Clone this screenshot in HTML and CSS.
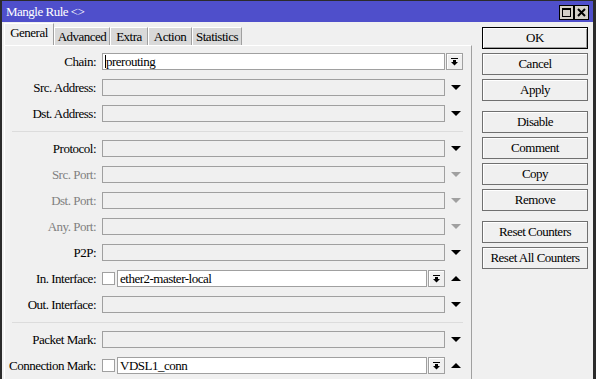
FILE: index.html
```html
<!DOCTYPE html>
<html>
<head>
<meta charset="utf-8">
<link rel="stylesheet" href="styles.css">
</head>
<body>
<div class="window">
  <div class="titlebar">
    <span class="title">Mangle Rule &lt;&gt;</span>
    <div class="tbtns">
      <span class="tbtn"><svg width="9" height="9" viewBox="0 0 9 9"><rect x="0.5" y="0.5" width="8" height="8" fill="none" stroke="#000"/><rect x="0" y="0" width="9" height="2" fill="#000"/></svg></span>
      <span class="tbtn"><svg width="9" height="9" viewBox="0 0 9 9"><path d="M1 1 L8 8 M8 1 L1 8" stroke="#000" stroke-width="2"/></svg></span>
    </div>
  </div>
  <div class="main">
    <div class="left">
      <div class="tabs">
        <div class="tab active w-general">General</div>
        <div class="tab w-advanced">Advanced</div>
        <div class="tab w-extra">Extra</div>
        <div class="tab w-action">Action</div>
        <div class="tab w-stats">Statistics</div>
      </div>
      <div class="panel">
        <div class="row">
          <div class="label">Chain:</div>
          <div class="ctrl">
            <div class="input white"><span class="caret"></span>prerouting</div>
            <div class="ddbtn"><svg width="7" height="8" viewBox="0 0 7 8"><rect x="0" y="0" width="7" height="1" fill="#000"/><rect x="2" y="2" width="3" height="2" fill="#000"/><polygon points="0,4 7,4 3.5,7.5" fill="#000"/></svg></div>
            <div class="pad4"></div>
          </div>
        </div>
        <div class="row">
          <div class="label">Src. Address:</div>
          <div class="ctrl"><div class="input"></div><div class="arrow"><span class="tri-down"></span></div></div>
        </div>
        <div class="row">
          <div class="label">Dst. Address:</div>
          <div class="ctrl"><div class="input"></div><div class="arrow"><span class="tri-down"></span></div></div>
        </div>
        <div class="sep"></div>
        <div class="row">
          <div class="label">Protocol:</div>
          <div class="ctrl"><div class="input"></div><div class="arrow"><span class="tri-down"></span></div></div>
        </div>
        <div class="row">
          <div class="label dis">Src. Port:</div>
          <div class="ctrl"><div class="input"></div><div class="arrow"><span class="tri-down dis"></span></div></div>
        </div>
        <div class="row">
          <div class="label dis">Dst. Port:</div>
          <div class="ctrl"><div class="input"></div><div class="arrow"><span class="tri-down dis"></span></div></div>
        </div>
        <div class="row">
          <div class="label dis">Any. Port:</div>
          <div class="ctrl"><div class="input"></div><div class="arrow"><span class="tri-down dis"></span></div></div>
        </div>
        <div class="row">
          <div class="label">P2P:</div>
          <div class="ctrl"><div class="input"></div><div class="arrow"><span class="tri-down"></span></div></div>
        </div>
        <div class="row">
          <div class="label">In. Interface:</div>
          <div class="ctrl">
            <div class="cb"></div>
            <div class="input white">ether2-master-local</div>
            <div class="ddbtn"><svg width="7" height="8" viewBox="0 0 7 8"><rect x="0" y="0" width="7" height="1" fill="#000"/><rect x="2" y="2" width="3" height="2" fill="#000"/><polygon points="0,4 7,4 3.5,7.5" fill="#000"/></svg></div>
            <div class="arrow"><span class="tri-up"></span></div>
          </div>
        </div>
        <div class="row">
          <div class="label">Out. Interface:</div>
          <div class="ctrl"><div class="input"></div><div class="arrow"><span class="tri-down"></span></div></div>
        </div>
        <div class="sep"></div>
        <div class="row">
          <div class="label">Packet Mark:</div>
          <div class="ctrl"><div class="input"></div><div class="arrow"><span class="tri-down"></span></div></div>
        </div>
        <div class="row">
          <div class="label">Connection Mark:</div>
          <div class="ctrl">
            <div class="cb"></div>
            <div class="input white">VDSL1_conn</div>
            <div class="ddbtn"><svg width="7" height="8" viewBox="0 0 7 8"><rect x="0" y="0" width="7" height="1" fill="#000"/><rect x="2" y="2" width="3" height="2" fill="#000"/><polygon points="0,4 7,4 3.5,7.5" fill="#000"/></svg></div>
            <div class="arrow"><span class="tri-up"></span></div>
          </div>
        </div>
      </div>
    </div>
    <div class="btns">
      <div class="btn default">OK</div>
      <div class="btn">Cancel</div>
      <div class="btn">Apply</div>
      <div class="btn group">Disable</div>
      <div class="btn">Comment</div>
      <div class="btn">Copy</div>
      <div class="btn">Remove</div>
      <div class="btn group">Reset Counters</div>
      <div class="btn">Reset All Counters</div>
    </div>
  </div>
</div>
</body>
</html>
```
FILE: styles.css
```css
* { box-sizing: border-box; }
html, body { margin: 0; padding: 0; }
body {
  width: 596px;
  height: 379px;
  overflow: hidden;
  background: #f0f0f0;
  font-family: "Liberation Serif", "Times New Roman", serif;
  font-size: 13px;
  letter-spacing: -0.5px;
  color: #000;
}
.window {
  width: 596px;
  height: 379px;
  border-left: 2px solid #2b2b2b;
  border-right: 3px solid #2b2b2b;
  border-top: 1px solid #2b2b2b;
  background: #f0f0f0;
  display: flex;
  flex-direction: column;
  overflow: hidden;
}
.titlebar {
  height: 21px;
  flex: none;
  background: #4f4fcb;
  color: #fff;
  display: flex;
  align-items: center;
  justify-content: space-between;
  padding: 0 4px;
}
.title { padding-top: 1px; }
.tbtns { display: flex; margin-top: 2px; }
.tbtn {
  width: 15px;
  height: 15px;
  background: #d4d0c8;
  border: 1px solid #000;
  display: flex;
  align-items: center;
  justify-content: center;
}
.main { display: flex; flex: 1; }
.left { width: 470px; display: flex; flex-direction: column; }
.tabs {
  display: flex;
  height: 22px;
  margin-top: 1px;
  padding-left: 2px;
  align-items: flex-end;
}
.tab {
  height: 18px;
  background: #d9d9d9;
  border-top: 1px solid #fff;
  border-left: 1px solid #fff;
  border-right: 1px solid #a0a0a0;
  text-align: center;
  line-height: 17px;
}
.tab.active {
  height: 22px;
  background: #f0f0f0;
  line-height: 18px;
}
.w-general { width: 50px; }
.w-advanced { width: 56px; }
.w-extra { width: 38px; }
.w-action { width: 44px; }
.w-stats { width: 50px; }
.panel {
  width: 468px;
  margin-left: 2px;
  flex: 1;
  border-top: 1px solid #fff;
  border-left: 1px solid #fff;
  border-right: 1px solid #a0a0a0;
  padding-top: 7px;
  display: flex;
  flex-direction: column;
  gap: 9px;
}
.row { display: flex; align-items: center; height: 17px; }
.label {
  width: 91px;
  margin-right: 6px;
  text-align: right;
  white-space: nowrap;
}
.label.dis { color: #808080; }
.ctrl { width: 365px; height: 17px; display: flex; align-items: center; }
.input {
  flex: 1;
  height: 17px;
  border: 1px solid #a0a0a0;
  background: #f0f0f0;
  padding-left: 2px;
  line-height: 15px;
  white-space: nowrap;
  overflow: hidden;
}
.input.white { background: #fff; }
.caret {
  display: inline-block;
  width: 1px;
  height: 13px;
  background: #000;
  vertical-align: -2px;
}
.ddbtn {
  width: 17px;
  height: 17px;
  margin-left: 1px;
  border: 1px solid #a0a0a0;
  background: #f0f0f0;
  box-shadow: inset 1px 1px 0 #fff;
  display: flex;
  align-items: center;
  justify-content: center;
  flex: none;
}
.pad4 { width: 4px; flex: none; }
.arrow { width: 22px; flex: none; display: flex; justify-content: center; align-items: center; }
.tri-down {
  width: 0; height: 0;
  border-left: 5px solid transparent;
  border-right: 5px solid transparent;
  border-top: 5px solid #000;
}
.tri-down.dis { border-top-color: #a0a0a0; }
.tri-up {
  width: 0; height: 0;
  border-left: 5px solid transparent;
  border-right: 5px solid transparent;
  border-bottom: 5px solid #000;
}
.cb {
  width: 13px;
  height: 13px;
  flex: none;
  border: 1px solid #a0a0a0;
  background: #fff;
  margin-right: 2px;
}
.sep {
  height: 1px;
  width: 451px;
  margin-left: 7px;
  margin-bottom: -1px;
  background: #dcdcdc;
  flex: none;
}
.btns {
  width: 106px;
  margin-left: 10px;
  padding-top: 5px;
  display: flex;
  flex-direction: column;
  gap: 4px;
}
.btn {
  height: 22px;
  border: 1px solid #707070;
  background: #f0f0f0;
  box-shadow: inset 1px 1px 0 #fff;
  text-align: center;
  line-height: 20px;
  white-space: nowrap;
}
.btn.default { border-color: #000; box-shadow: inset 1px 1px 0 #fff, inset -1px -1px 0 #a0a0a0; }
.btn.group { margin-top: 6px; }
```
